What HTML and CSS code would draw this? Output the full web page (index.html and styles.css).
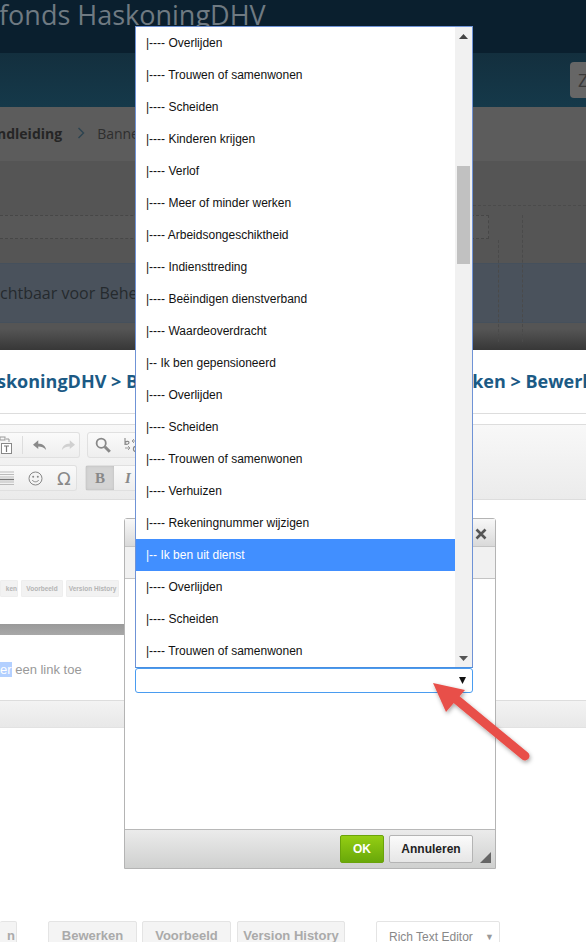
FILE: index.html
```html
<!DOCTYPE html>
<html>
<head>
  <title>Banner bewerken</title>
  <link rel="stylesheet" href="styles.css">
</head>
<body>
  <div class="page">
    <div class="backdrop">
      <div class="site-head"><span class="site-name">fonds HaskoningDHV</span></div>
      <div class="nav-band"><div class="search-box">Z</div></div>
      <div class="crumbs">
        <b>ndleiding</b>
        <svg class="crumb-sep" width="8" height="12" viewBox="0 0 8 12"><path d="M1.500 1l5 5-5 5" fill="none" stroke="#2c4350" stroke-width="1.400"/></svg>
        <span>Banne</span>
      </div>
      <div class="content">
        <div class="dash-row"></div>
        <div class="notice">chtbaar voor Behe</div>
        <div class="dash-top"></div>
        <div class="dash-col one"></div>
        <div class="dash-col two"></div>
      </div>
    </div>

    <div class="edit-title">
      <span class="edit-left">skoningDHV &gt; B</span>
      <span class="edit-right">ken &gt; Bewerken</span>
    </div>

    <div class="toolbar">
      <div class="tool-row">
        <div class="tool-group first">
          <svg class="paste" width="17" height="19" viewBox="0 0 17 19"><path d="M1 3h4M11 3h3v3M1 3v9h4" fill="none" stroke="#999"/><rect x="5" y="1" width="5" height="3" fill="none" stroke="#999"/><rect x="6.500" y="7.500" width="10" height="10" fill="#fff" stroke="#888"/><path d="M9 10h5M11.500 10v6" stroke="#777" stroke-width="1.200"/></svg>
          <i class="tool-sep"></i>
          <svg width="14" height="11" viewBox="0 0 16 12"><path d="M6 0L0 5l6 5V7c4 0 6 1 9 4-1-5-4-7-9-7z" fill="#8a8a8a"/></svg>
          <svg class="redo" width="14" height="11" viewBox="0 0 16 12"><path d="M10 0l6 5-6 5V7C6 7 4 8 1 11c1-5 4-7 9-7z" fill="#d0d0d0"/></svg>
        </div>
        <div class="tool-group second">
          <svg width="16" height="16" viewBox="0 0 16 16"><circle cx="6.200" cy="6.200" r="4.600" fill="#f6f6f6" stroke="#888" stroke-width="1.800"/><path d="M9.800 9.800l5 5" stroke="#888" stroke-width="3"/></svg>
          <svg width="16" height="16" viewBox="0 0 16 16"><path d="M2 1v7M2 5.500c2-2 4-1 4 0s-2 3-4 1" fill="none" stroke="#888" stroke-width="1.100"/><path d="M9 4h5M9 4l2-2M9 4l2 2M2 11h5M7 11l-2-2M7 11l-2 2" fill="none" stroke="#999"/><circle cx="13" cy="12" r="2.600" fill="none" stroke="#888" stroke-width="1.100"/></svg>
        </div>
      </div>
      <div class="tool-row">
        <div class="tool-group third">
          <svg width="14" height="15" viewBox="0 0 14 15"><path d="M0 1h14M0 3.500h14M0 6h14M0 11h14M0 13.500h14" stroke="#bbb"/><path d="M0 8.500h14" stroke="#777" stroke-width="1.400"/></svg>
          <svg width="15" height="15" viewBox="0 0 15 15"><circle cx="7.500" cy="7.500" r="6.500" fill="#f4f4f4" stroke="#888"/><circle cx="5.200" cy="5.800" r="1" fill="#888"/><circle cx="9.800" cy="5.800" r="1" fill="#888"/><path d="M4.200 9c1.500 2.400 5 2.400 6.600 0" fill="none" stroke="#888"/></svg>
          <span class="omega">Ω</span>
        </div>
        <div class="tool-group fourth">
          <span class="tool-btn active">B</span>
          <span class="tool-btn italic">I</span>
        </div>
      </div>
    </div>

    <div class="preview">
      <div class="mini-btns">
        <span class="mini-btn b1">ken</span>
        <span class="mini-btn b2">Voorbeeld</span>
        <span class="mini-btn b3">Version History</span>
      </div>
      <div class="mini-bar"></div>
      <p class="preview-text"><span class="sel">er</span> een link toe</p>
    </div>
    <div class="foot-bar"></div>

    <div class="mode-bar">
      <span class="mode-btn m0">n</span>
      <span class="mode-btn m1">Bewerken</span>
      <span class="mode-btn m2">Voorbeeld</span>
      <span class="mode-btn m3">Version History</span>
      <span class="mode-select">Rich Text Editor <i>▼</i></span>
    </div>
  </div>

  <div class="dialog">
    <div class="dialog-title">
      <svg class="close" width="12" height="12" viewBox="0 0 12 12"><path d="M1.500 1.500l9 9M10.500 1.500l-9 9" stroke="#555" stroke-width="2.600"/></svg>
    </div>
    <div class="dialog-tabs"></div>
    <div class="dialog-body"></div>
    <div class="dialog-foot">
      <button class="btn-ok">OK</button>
      <button class="btn-cancel">Annuleren</button>
      <svg class="resizer" width="11" height="11" viewBox="0 0 11 11"><path d="M11 0v11H0z" fill="#666"/></svg>
    </div>
  </div>

  <div class="select-box">
    <svg width="7" height="7" viewBox="0 0 7 7"><path d="M0 0h7L3.500 7z" fill="#111"/></svg>
  </div>

  <div class="listbox">
    <ul class="options">
      <li>|---- Overlijden</li>
      <li>|---- Trouwen of samenwonen</li>
      <li>|---- Scheiden</li>
      <li>|---- Kinderen krijgen</li>
      <li>|---- Verlof</li>
      <li>|---- Meer of minder werken</li>
      <li>|---- Arbeidsongeschiktheid</li>
      <li>|---- Indiensttreding</li>
      <li>|---- Beëindigen dienstverband</li>
      <li>|---- Waardeoverdracht</li>
      <li>|-- Ik ben gepensioneerd</li>
      <li>|---- Overlijden</li>
      <li>|---- Scheiden</li>
      <li>|---- Trouwen of samenwonen</li>
      <li>|---- Verhuizen</li>
      <li>|---- Rekeningnummer wijzigen</li>
      <li class="selected">|-- Ik ben uit dienst</li>
      <li>|---- Overlijden</li>
      <li>|---- Scheiden</li>
      <li>|---- Trouwen of samenwonen</li>
    </ul>
    <div class="scrollbar">
      <svg class="arrow-up" width="9" height="5" viewBox="0 0 9 5"><path d="M4.500 0l4.500 5H0z" fill="#444"/></svg>
      <div class="thumb"></div>
      <svg class="arrow-down" width="9" height="5" viewBox="0 0 9 5"><path d="M4.500 5L9 0H0z" fill="#555"/></svg>
    </div>
  </div>

  <svg class="pointer" width="116" height="100" viewBox="0 0 116 100">
    <defs>
      <filter id="drop" x="-20%" y="-20%" width="140%" height="140%">
        <feDropShadow dx="1" dy="2" stdDeviation="2" flood-color="#000" flood-opacity="0.35"/>
      </filter>
    </defs>
    <g filter="url(#drop)">
      <path d="M26 20L100 81" stroke="#e8504a" stroke-width="9" stroke-linecap="round"/>
      <path d="M8 8L40 15 21 37z" fill="#e8504a"/>
    </g>
  </svg>
</body>
</html>
```
FILE: styles.css
```css
* {
  box-sizing: border-box;
}

body {
  margin: 0;
  width: 586px;
  height: 942px;
  overflow: hidden;
  position: relative;
  background: #fff;
  font-family: "Liberation Sans", Arial, sans-serif;
}

.page {
  height: 942px;
  display: flex;
  flex-direction: column;
  overflow: hidden;
}

/* dimmed page behind the modal */
.backdrop {
  height: 350px;
  display: flex;
  flex-direction: column;
  flex-shrink: 0;
  font-family: "Open Sans", sans-serif;
}

.site-head {
  height: 53px;
  background: #0a1f2e;
  overflow: hidden;
}

.site-name {
  display: block;
  margin-left: -1px;
  margin-top: -8px;
  font-size: 27px;
  line-height: 46px;
  color: #6f7a82;
}

.nav-band {
  height: 54px;
  background: linear-gradient(#132f3e, #15394a);
  display: flex;
  justify-content: flex-end;
  align-items: center;
}

.search-box {
  width: 16px;
  height: 36px;
  margin-top: -1px;
  background: #666;
  border-radius: 4px 0 0 4px;
  color: #3a3a3a;
  font-size: 18px;
  line-height: 36px;
  padding-left: 8px;
  overflow: hidden;
}

.crumbs {
  height: 54px;
  padding: 0 0 2px 0;
  background: #5c5c5c;
  display: flex;
  align-items: center;
  gap: 15px;
  font-size: 14px;
  color: #2e2e2e;
}

.crumbs b {
  margin-left: -3px;
  font-weight: 700;
  color: #252525;
}

.crumbs span {
  margin-left: -3px;
}

.content {
  flex: 1;
  position: relative;
  background: linear-gradient(#555 168px, #373737 189px);
  padding-top: 54px;
}

.dash-row {
  width: 489px;
  height: 24px;
  border: 1px dashed #474747;
  border-left: 0;
  background: #585858;
}

.notice {
  margin-top: 24px;
  height: 60px;
  background: #4a525c;
  border-top: 1px solid #45505c;
  border-bottom: 1px solid #45505c;
  font-size: 16px;
  line-height: 58px;
  color: #252a2e;
  white-space: nowrap;
  overflow: hidden;
}

.dash-top {
  position: absolute;
  left: 473px;
  right: 0;
  top: 44px;
  border-top: 1px dashed #4b4b4b;
}

.dash-col {
  position: absolute;
  bottom: 8px;
  border-left: 1px dashed #4a4a4a;
}

.dash-col.one {
  left: 498px;
  top: 79px;
}

.dash-col.two {
  left: 522px;
  top: 54px;
}

/* modal page title */
.edit-title {
  height: 64px;
  flex-shrink: 0;
  display: flex;
  justify-content: space-between;
  border-bottom: 1px solid #ddd;
  font-family: "Open Sans", sans-serif;
  font-weight: 700;
  font-size: 18px;
  line-height: 62px;
  color: #1b5a85;
  white-space: nowrap;
  overflow: hidden;
}

.edit-left {
  margin-left: -3px;
}

.edit-right {
  margin-right: -30px;
}

.toolbar {
  height: 76px;
  margin-top: 10px;
  flex-shrink: 0;
  padding-top: 7px;
  background: linear-gradient(#f8f8f8, #ebebeb);
  border-top: 1px solid #ddd;
  border-bottom: 1px solid #ddd;
  display: flex;
  flex-direction: column;
  gap: 7px;
}

.tool-row {
  display: flex;
  gap: 7px;
  height: 26px;
}

.tool-group {
  display: flex;
  align-items: center;
  background: linear-gradient(#fafafa, #eee);
  border: 1px solid #e0e0e0;
  border-left: 0;
  border-radius: 0 3px 3px 0;
}

.tool-group.first {
  width: 80px;
  gap: 10px;
}

.paste {
  margin-left: -5px;
}

.redo {
  margin-left: 4px;
}

.tool-group.second {
  width: 60px;
  gap: 12px;
  padding-left: 7px;
  border-left: 1px solid #e0e0e0;
  border-radius: 3px 0 0 3px;
}

.tool-group.third {
  width: 77px;
  gap: 14px;
}

.tool-group.fourth {
  margin-left: 1px;
  width: 60px;
  border-left: 1px solid #e0e0e0;
  border-radius: 3px 0 0 3px;
}

.tool-sep {
  width: 1px;
  height: 18px;
  background: #ddd;
}

.omega {
  font-size: 18px;
  color: #888;
  font-family: "DejaVu Sans", sans-serif;
}

.tool-btn {
  width: 28px;
  height: 24px;
  text-align: center;
  font: 700 15px/24px "Liberation Serif", serif;
  color: #888;
}

.tool-btn.active {
  background: #d4d4d4;
  box-shadow: inset 0 0 3px #bbb;
}

.tool-btn.italic {
  font-style: italic;
}

.preview {
  height: 200px;
  flex-shrink: 0;
  padding-top: 80px;
  background: #fff;
}

.mini-btns {
  display: flex;
  gap: 3px;
}

.mini-btn {
  height: 17px;
  background: #f2f2f2;
  border: 1px solid #eee;
  border-radius: 1px;
  font-size: 6.500px;
  font-weight: 700;
  line-height: 15px;
  color: #b4b4b4;
  text-align: center;
  white-space: nowrap;
  overflow: hidden;
}

.b1 { width: 18px; text-align: right; }
.b2 { width: 42px; }
.b3 { width: 53px; }

.mini-bar {
  width: 124px;
  height: 11px;
  margin-top: 27px;
  background: linear-gradient(#9a9a9a, #a8a8a8);
}

.preview-text {
  margin: 27px 0 0;
  font-size: 13px;
  line-height: 16px;
  color: #999;
}

.sel {
  background: #b3d0ff;
  color: #fff;
}

.foot-bar {
  height: 28px;
  flex-shrink: 0;
  background: linear-gradient(#f3f3f3, #e8e8e8);
  border-top: 1px solid #ddd;
  border-bottom: 1px solid #e2e2e2;
}

.mode-bar {
  margin-top: 193px;
  display: flex;
  height: 30px;
  flex-shrink: 0;
  font-size: 13px;
  font-weight: 700;
  color: #aaa;
}

.mode-btn {
  height: 30px;
  background: #f4f4f4;
  border: 1px solid #e4e4e4;
  border-radius: 2px;
  line-height: 28px;
  text-align: center;
  margin-right: 5px;
  white-space: nowrap;
  overflow: hidden;
}

.m0 { width: 17px; margin-right: 31px; border-left: 0; text-align: right; padding-right: 1px; }
.m1 { width: 89px; }
.m2 { width: 89px; margin-right: 6px; }
.m3 { width: 108px; margin-right: 31px; }

.mode-select {
  width: 124px;
  height: 30px;
  display: flex;
  justify-content: space-between;
  background: #fff;
  border: 1px solid #e4e4e4;
  border-radius: 2px;
  padding: 0 5px 0 12px;
  font-size: 12px;
  font-weight: 400;
  line-height: 30px;
  color: #888;
  white-space: nowrap;
}

.mode-select i {
  font-style: normal;
  font-size: 9px;
  color: #999;
}

/* overlays */
.dialog {
  position: absolute;
  left: 124px;
  top: 518px;
  width: 372px;
  height: 351px;
  display: flex;
  flex-direction: column;
  border: 1px solid #b4b4b4;
  border-radius: 3px 3px 0 0;
  background: #fff;
}

.dialog-title {
  height: 28px;
  background: linear-gradient(#f8f8f8, #d9d9d9);
  border-bottom: 1px solid #c4c4c4;
  position: relative;
}

.close {
  position: absolute;
  right: 8px;
  top: 9px;
}

.dialog-tabs {
  height: 32px;
  background: #f1f1f1;
  border-bottom: 1px solid #c4c4c4;
}

.dialog-body {
  flex: 1;
}

.dialog-foot {
  height: 39px;
  background: linear-gradient(#ebebeb, #cfd0cf);
  border-top: 1px solid #b8b8b8;
  display: flex;
  justify-content: flex-end;
  align-items: flex-start;
  padding: 5px 22px 0 0;
  gap: 5px;
  position: relative;
}

.btn-ok,
.btn-cancel {
  height: 28px;
  border-radius: 2px;
  font: 700 12px "Liberation Sans", sans-serif;
  padding: 0;
}

.btn-ok {
  width: 44px;
  background: linear-gradient(#94ce13, #69a80a);
  border: 1px solid #6aa30a;
  color: #fff;
}

.btn-cancel {
  width: 84px;
  background: linear-gradient(#fbfbfb, #e6e6e6);
  border: 1px solid #b4b4b4;
  color: #222;
}

.resizer {
  position: absolute;
  right: 4px;
  bottom: 5px;
}

.select-box {
  position: absolute;
  left: 135px;
  top: 668px;
  width: 338px;
  height: 25px;
  border: 1px solid #4a9cf0;
  border-radius: 3px;
  background: #fff;
  display: flex;
  justify-content: flex-end;
  padding: 8px 6px 0 0;
}

.listbox {
  position: absolute;
  left: 135px;
  top: 26px;
  width: 338px;
  height: 642px;
  display: flex;
  background: #fff;
  border: 1px solid #6f93d6;
  border-bottom-color: #4a8ee0;
}

.options {
  flex: 1;
  margin: 0;
  padding: 0;
  list-style: none;
}

.options li {
  height: 32px;
  padding-left: 10px;
  font-size: 12px;
  line-height: 32px;
  color: #111;
  white-space: nowrap;
}

.options li.selected {
  background: #418fff;
  color: #fff;
}

.scrollbar {
  width: 17px;
  position: relative;
  background: #f1f1f1;
}

.thumb {
  position: absolute;
  left: 2px;
  top: 139px;
  width: 13px;
  height: 98px;
  background: #c1c1c1;
}

.arrow-up {
  position: absolute;
  left: 4px;
  top: 7px;
}

.arrow-down {
  position: absolute;
  left: 4px;
  bottom: 6px;
}

.pointer {
  position: absolute;
  left: 425px;
  top: 675px;
}
```
